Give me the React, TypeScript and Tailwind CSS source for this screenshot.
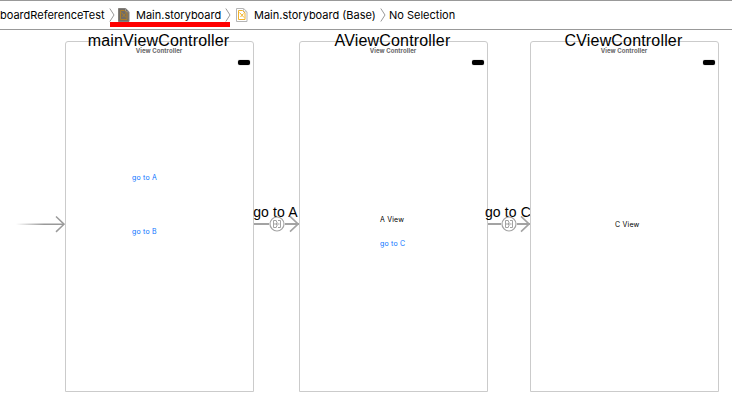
import React from "react";

function Chevron() {
  return (
    <svg className="h-4 w-[6px] shrink-0" viewBox="0 0 6 16" fill="none" stroke="#999" strokeWidth="1">
      <path d="M.8 1.5 5 8 .8 14.5" />
    </svg>
  );
}

function StoryboardIcon({ active = false }: { active?: boolean }) {
  const accent = active ? "#ad7f2a" : "#f0b22a";
  return (
    <svg className="h-[14px] w-[12px] shrink-0" viewBox="0 0 12 14" fill="none">
      <path
        d="M.5.5h7.2l3.3 3.3v9.7H.5z"
        fill={active ? "#706c66" : "#fff"}
        stroke={active ? "#827f7a" : "#b5b5b5"}
      />
      <path d="M7.5.5v3.3H11" stroke={active ? "#969696" : "#c4c4c4"} />
      <path d="M2.5 2.5h4l2.5 2.5v6.5H2.5z" stroke={accent} />
      <path d="m3.5 4.5 4.5 5M7.5 5.5l-3 3.5" stroke={accent} strokeWidth="1" />
    </svg>
  );
}

function Scene({ title, children }: { title: string; children: React.ReactNode }) {
  return (
    <section className="flex h-[351px] w-[189px] shrink-0 flex-col rounded-t-[3px] border border-[#cbcbcb]">
      <h2 className="-mt-[11px] h-[17px] pr-[2px] text-center text-[16px] leading-5 tracking-[0.17px] whitespace-nowrap">
        {title}
      </h2>
      <div className="h-[6px] pr-[1px] text-center font-[Inter,sans-serif] text-[6px] leading-[6px] font-bold tracking-[0.08px] text-[#666]">
        View Controller
      </div>
      <div className="mt-[6px] mr-[3px] h-[5px] w-[12px] self-end rounded-[2px] bg-black shadow-[0_0_1px_#555]" />
      {children}
    </section>
  );
}

function Label({ link = false, children }: { link?: boolean; children: string }) {
  return (
    <span
      className={`block font-[Inter,sans-serif] text-[7px] leading-[10px] tracking-[0.2px] whitespace-nowrap ${link ? "text-[#0a74ff]" : "text-black"}`}
    >
      {children}
    </span>
  );
}

function Segue({ label }: { label: string }) {
  return (
    <div className="flex min-w-0 flex-col items-center pt-[162px]">
      <span className="h-[12px] pr-[2px] text-[14px] leading-[18px] tracking-[0.15px] whitespace-nowrap">{label}</span>
      <div className="flex w-full items-center">
        <div className="h-[1.5px] flex-1 bg-[#a3a3a3]" />
        <svg className="size-[16px] shrink-0" viewBox="0 0 16 16" fill="none" stroke="#a3a3a3">
          <circle cx="8" cy="8" r="7" strokeWidth="1.2" />
          <path d="M7 4.5H4.5v7H7M9 4.5h2.5v7H9M7.5 4.5v2M7.5 9.5v2M4.5 8h6M8.5 6.5 7 8l1.5 1.5" />
        </svg>
        <div className="flex flex-1 items-center justify-end">
          <div className="h-[1.5px] flex-1 bg-[#a3a3a3]" />
          <svg className="-ml-[10px] h-[18px] w-[10px] shrink-0" viewBox="0 0 10 18" fill="none" stroke="#a3a3a3" strokeWidth="1.6">
            <path d="m1 1.3 8 7.7-8 7.7" />
          </svg>
        </div>
      </div>
    </div>
  );
}

export default function App() {
  return (
    <div className="flex h-[405px] w-[732px] flex-col overflow-hidden bg-white font-['Liberation_Sans',Arial,sans-serif] text-black">
      <nav className="relative flex h-[30px] shrink-0 items-center border-y border-[#999] font-[Inter,sans-serif] text-[11px] leading-4">
        <div className="w-[109px] shrink-0 whitespace-nowrap">boardReferenceTest</div>
        <div className="flex w-[122px] shrink-0 items-center">
          <Chevron />
          <div className="flex flex-1 items-center gap-[6px] pl-[3px]">
            <StoryboardIcon active />
            <span className="whitespace-nowrap">Main.storyboard</span>
          </div>
          <Chevron />
        </div>
        <div className="flex w-[149px] shrink-0 items-center gap-[6px] pl-[5px]">
          <StoryboardIcon />
          <span className="whitespace-nowrap">Main.storyboard (Base)</span>
        </div>
        <div className="flex items-center gap-[3px]">
          <Chevron />
          <span className="whitespace-nowrap">No Selection</span>
        </div>
        <div className="absolute top-[21px] left-[110px] h-[5px] w-[120px] bg-[#f00]" />
      </nav>
      <main className="grid min-h-0 flex-1 grid-cols-[65px_189px_45px_189px_42px_189px] pt-[11px]">
        <div className="flex justify-end pt-[173px]">
          <svg className="h-[20px] w-[49px]" viewBox="0 0 49 20" fill="none">
            <defs>
              <linearGradient id="entry" gradientUnits="userSpaceOnUse" x1="0" y1="10" x2="28" y2="10">
                <stop stopColor="#999" stopOpacity="0" />
                <stop offset="1" stopColor="#999" />
              </linearGradient>
            </defs>
            <path d="M0 10.2h48" stroke="url(#entry)" strokeWidth="1.5" />
            <path d="m40 2.5 8 7.7-8 7.7" stroke="#9b9b9b" strokeWidth="1.5" />
          </svg>
        </div>
        <Scene title="mainViewController">
          <div className="flex flex-col gap-[44px] pt-[108px] pl-[66px]">
            <Label link>go to A</Label>
            <Label link>go to B</Label>
          </div>
        </Scene>
        <Segue label="go to A" />
        <Scene title="AViewController">
          <div className="flex flex-col gap-[14px] pt-[150px] pl-[80px]">
            <Label>A View</Label>
            <Label link>go to C</Label>
          </div>
        </Scene>
        <Segue label="go to C" />
        <Scene title="CViewController">
          <div className="pt-[155px] pl-[84px]">
            <Label>C View</Label>
          </div>
        </Scene>
      </main>
    </div>
  );
}
